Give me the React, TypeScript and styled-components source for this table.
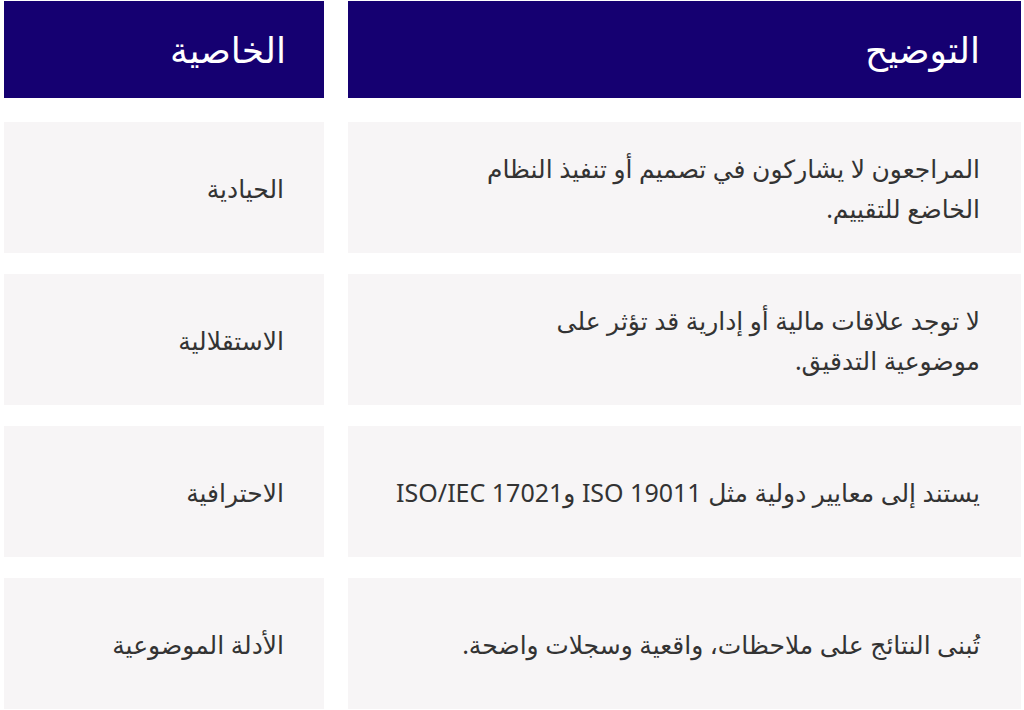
import React from "react";
import styled, { createGlobalStyle } from "styled-components";

const GlobalStyle = createGlobalStyle`
  html, body {
    margin: 0;
    padding: 0;
    background: #ffffff;
  }
  body {
    font-family: "Noto Sans", "DejaVu Sans", sans-serif;
  }
`;

const Table = styled.div`
  direction: rtl;
  display: flex;
  flex-direction: column;
  gap: 21px;
  padding: 1px 3px 0 4px;
  width: 1017px;
`;

const Row = styled.div<{ $header?: boolean }>`
  display: grid;
  grid-template-columns: 673px 320px;
  column-gap: 24px;
  height: ${(p) => (p.$header ? "97px" : "131px")};
  margin-bottom: ${(p) => (p.$header ? "3px" : "0")};
`;

const HeadCell = styled.div<{ $pad: number }>`
  background: #150071;
  color: #ffffff;
  display: flex;
  align-items: center;
  padding-right: ${(p) => p.$pad}px;
  font-size: 36px;
  font-weight: 400;
`;

const Cell = styled.div<{ $pad: number }>`
  background: #f7f5f6;
  color: #333333;
  display: flex;
  align-items: center;
  padding-right: ${(p) => p.$pad}px;
  padding-left: 24px;
  font-size: 25px;
  line-height: 40px;
`;

const DescText = styled.span<{ $max: number }>`
  display: block;
  max-width: ${(p) => p.$max}px;
`;

const rows = [
  {
    desc: "المراجعون لا يشاركون في تصميم أو تنفيذ النظام الخاضع للتقييم.",
    prop: "الحيادية",
    width: 530,
  },
  {
    desc: "لا توجد علاقات مالية أو إدارية قد تؤثر على موضوعية التدقيق.",
    prop: "الاستقلالية",
    width: 470,
  },
  {
    desc: "يستند إلى معايير دولية مثل ISO 19011 وISO/IEC 17021",
    prop: "الاحترافية",
    width: 620,
  },
  {
    desc: "تُبنى النتائج على ملاحظات، واقعية وسجلات واضحة.",
    prop: "الأدلة الموضوعية",
    width: 620,
  },
];

export default function App() {
  return (
    <>
      <GlobalStyle />
      <Table>
        <Row $header>
          <HeadCell $pad={41}>التوضيح</HeadCell>
          <HeadCell $pad={38}>الخاصية</HeadCell>
        </Row>
        {rows.map((r) => (
          <Row key={r.prop}>
            <Cell $pad={41}>
              <DescText $max={r.width}>{r.desc}</DescText>
            </Cell>
            <Cell $pad={40}>{r.prop}</Cell>
          </Row>
        ))}
      </Table>
    </>
  );
}
